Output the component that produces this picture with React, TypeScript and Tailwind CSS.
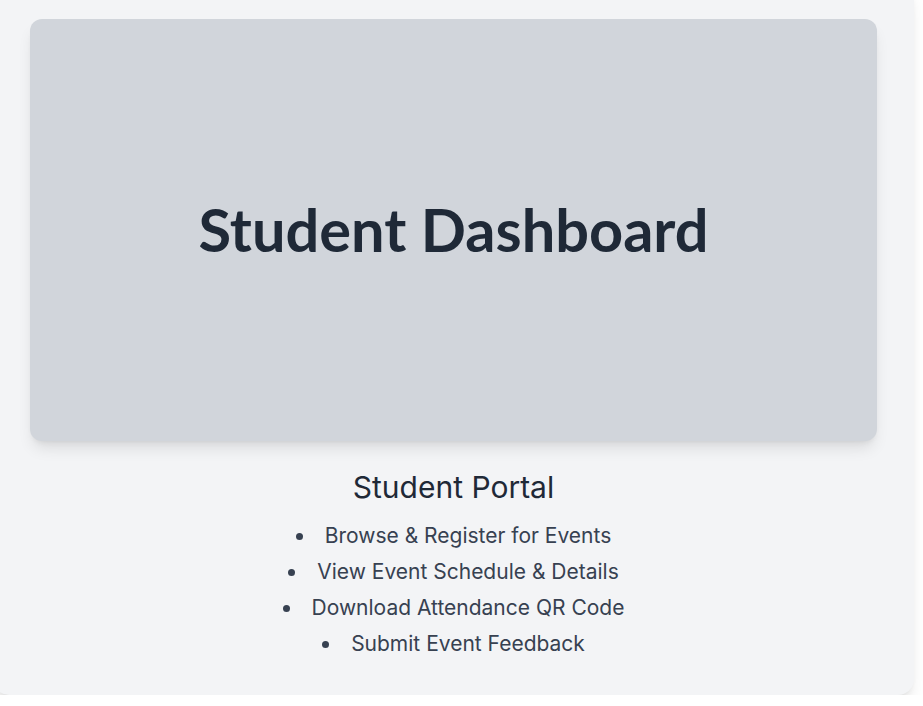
export default function App() {
  const features = [
    "Browse & Register for Events",
    "View Event Schedule & Details",
    "Download Attendance QR Code",
    "Submit Event Feedback",
  ];
  return (
    <div className="min-h-screen bg-white font-['Inter',sans-serif]">
      <div className="-ml-[7px] -mt-[18px] w-[921px] rounded-2xl bg-[#f3f4f6] px-[37px] pt-[37px] pb-[37px] shadow-lg">
        <div className="flex h-[422px] items-center justify-center rounded-xl bg-[#d1d5db] shadow-lg">
          <h1 className="font-['Lato',sans-serif] text-[59.5px] leading-none font-bold text-[#1f2937]">
            Student Dashboard
          </h1>
        </div>
        <div className="mt-[28px] text-center">
          <h2 className="text-3xl leading-9 text-[#1f2937]">Student Portal</h2>
          <ul className="mt-[17px] list-inside list-disc space-y-2 text-[21px] leading-7 text-[#374151]">
            {features.map((f) => (
              <li key={f}>{f}</li>
            ))}
          </ul>
        </div>
      </div>
    </div>
  );
}
